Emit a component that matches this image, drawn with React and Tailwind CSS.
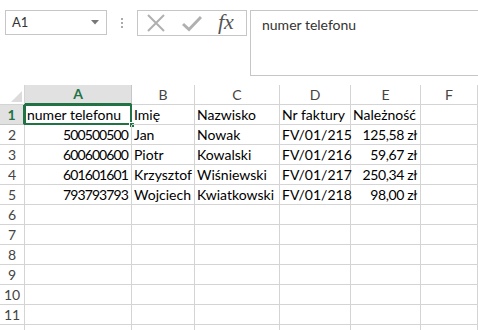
import React from "react";

const cols = ["A", "B", "C", "D", "E", "F"];
const data = [
  ["numer telefonu", "Imię", "Nazwisko", "Nr faktury", "Należność"],
  ["500500500", "Jan", "Nowak", "FV/01/215", "125,58 zł"],
  ["600600600", "Piotr", "Kowalski", "FV/01/216", "59,67 zł"],
  ["601601601", "Krzysztof", "Wiśniewski", "FV/01/217", "250,34 zł"],
  ["793793793", "Wojciech", "Kwiatkowski", "FV/01/218", "98,00 zł"],
];
const rightAlign = (r, c) => r > 0 && (c === 0 || c === 4);

export default function App() {
  const font = { fontFamily: "Lato, 'Open Sans', sans-serif" };
  return (
    <div className="w-[478px] h-[330px] overflow-hidden bg-white text-black" style={font}>
      {/* top bar */}
      <div className="h-[85px] flex items-start pt-[10px] pl-[5px]">
        <div className="w-[102px] h-[25px] border border-[#c6c6c6] flex items-center justify-between pl-[6px] pr-[7px]">
          <span className="text-[13px] text-[#333]">A1</span>
          <svg width="8" height="5" viewBox="0 0 8 5"><path d="M0 0h8L4 4.5z" fill="#777" /></svg>
        </div>
        <div className="w-[30px] h-[25px] flex flex-col items-center justify-center gap-[2px]">
          <span className="w-[2px] h-[2px] bg-[#aaa]" />
          <span className="w-[2px] h-[2px] bg-[#aaa]" />
          <span className="w-[2px] h-[2px] bg-[#aaa]" />
        </div>
        <div className="w-[110px] h-[26px] border border-[#c6c6c6] flex items-center pl-[8px] gap-[16px]">
          <svg width="20" height="18" viewBox="0 0 20 18"><path d="M2 1L18 17M18 1L2 17" stroke="#b0b0b0" strokeWidth="2" fill="none" /></svg>
          <svg width="20" height="18" viewBox="0 0 20 18"><path d="M1 10L7 15.5L19 3" stroke="#b0b0b0" strokeWidth="3" fill="none" /></svg>
          <span className="italic text-[22px] leading-none text-[#555] -mt-[2px]" style={{ fontFamily: "'Liberation Serif', serif" }}>fx</span>
        </div>
        <div className="ml-[3px] flex-1 h-[66px] border border-[#c6c6c6] border-r-0 pl-[11px] pt-[1px]">
          <span className="text-[14px] text-[#333]">numer telefonu</span>
        </div>
      </div>
      {/* grid */}
      <div className="grid grid-cols-[25px_107px_63px_85px_71px_70px_1fr] text-[14px] leading-none">
        {/* header row */}
        <div className="h-[20px] border-r border-b border-[#d4d4d4] bg-white relative">
          <svg className="absolute right-[2px] bottom-[2px]" width="11" height="11" viewBox="0 0 11 11"><path d="M11 0V11H0z" fill="#dcdcdc" /></svg>
        </div>
        {cols.map((c) =>
          c === "A" ? (
            <div key={c} className="h-[20px] bg-[#e1e1e1] border-r border-[#c6c6c6] border-b-2 border-b-[#217346] flex items-center justify-center text-[#217346] font-bold text-[14px]">
              {c}
            </div>
          ) : (
            <div key={c} className="h-[20px] bg-white border-r border-b border-[#d4d4d4] flex items-center justify-center text-[#444] text-[14px]">
              {c}
            </div>
          )
        )}
        {Array.from({ length: 12 }).map((_, r) => (
          <React.Fragment key={r}>
            <div
              className={
                r === 0
                  ? "h-[20px] bg-[#e1e1e1] border-r-2 border-r-[#217346] border-b border-[#c6c6c6] flex items-center justify-center text-[#217346] font-bold text-[14px]"
                  : "h-[20px] bg-white border-r border-b border-[#d4d4d4] flex items-center justify-center text-[#444] text-[14px]"
              }
            >
              {r < 11 ? r + 1 : ""}
            </div>
            {cols.map((c, ci) => {
              const v = data[r] ? data[r][ci] || "" : "";
              const numeric = r > 0 && ci === 0;
              const money = r > 0 && ci === 4;
              return (
                <div
                  key={c}
                  className={
                    "h-[20px] border-r border-b border-[#d4d4d4] flex items-center whitespace-nowrap relative " +
                    (rightAlign(r, ci) ? "justify-end pr-[3px] " : "justify-start pl-[2px] ") +
                    (numeric ? "tracking-[-0.9px]" : money ? "tracking-[-0.4px]" : "")
                  }
                >
                  {v}
                  {r === 0 && ci === 0 && (
                    <>
                      <div className="absolute -left-[1px] -top-[1px] -right-[1px] -bottom-[1px] border-2 border-[#217346]" />
                      <div className="absolute -right-[4px] -bottom-[4px] w-[6px] h-[6px] bg-[#217346] border border-white" />
                    </>
                  )}
                </div>
              );
            })}
          </React.Fragment>
        ))}
      </div>
    </div>
  );
}
